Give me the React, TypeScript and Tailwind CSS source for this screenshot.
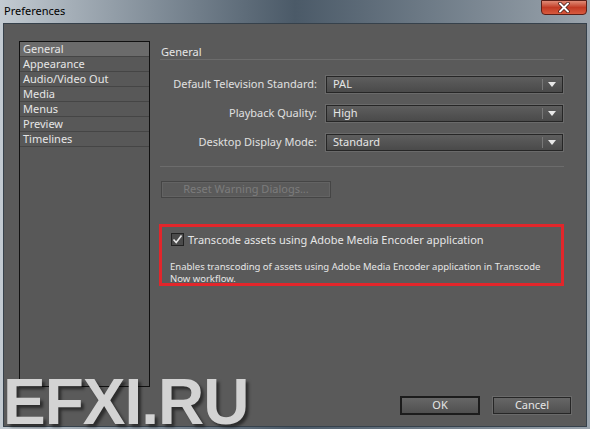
import React from "react";

const font = { fontFamily: '"Noto Sans", "DejaVu Sans", sans-serif' };

function Select({ value }: { value: string }) {
  return (
    <div className="w-[237px] h-[17px] border border-[#262626] shadow-[0_0_0_1px_#6a6a6a] bg-gradient-to-b from-[#5e5e5e] to-[#4a4a4a] flex items-center">
      <span className="flex-1 pl-[6px] text-[11px] leading-none text-[#e6e6e6] -mt-[2px]">{value}</span>
      <div className="w-px h-[11px] bg-[#2e2e2e] border-r border-[#777]" />
      <svg width="18" height="15" viewBox="0 0 18 15" className="mr-px">
        <path d="M5 5 L13 5 L9 10 Z" fill="#e8e8e8" />
      </svg>
    </div>
  );
}

function Row({ label, value }: { label: string; value: string }) {
  return (
    <div className="flex items-center h-[17px]">
      <div className="w-[166px] whitespace-nowrap text-right pr-[9px] text-[11px] text-[#e0e0e0]">{label}</div>
      <Select value={value} />
    </div>
  );
}

const items = ["General", "Appearance", "Audio/Video Out", "Media", "Menus", "Preview", "Timelines"];

export default function App() {
  return (
    <div
      className="relative w-[590px] h-[429px] overflow-hidden bg-gradient-to-r from-[#c3cbd2] via-[#4b5a68] to-[#9aa4ad]"
      style={font}
    >
      {/* title bar */}
      <div className="h-[23px] flex items-start justify-between">
        <span className="pl-[4px] pt-[3px] text-[11px] text-black">Preferences</span>
        <div className="mr-[3px] w-[46px] h-[15px] rounded-b-[4px] border border-[#5b1f18] bg-gradient-to-b from-[#e08a76] via-[#c23a24] to-[#d85a3e] flex items-center justify-center">
          <svg width="14" height="11" viewBox="0 0 14 11">
            <path d="M3 1.5 L11 9.5 M11 1.5 L3 9.5" stroke="#3a1510" strokeWidth="3.4" strokeLinecap="round" />
            <path d="M3 1.5 L11 9.5 M11 1.5 L3 9.5" stroke="#ffffff" strokeWidth="2" strokeLinecap="round" />
          </svg>
        </div>
      </div>

      {/* client area */}
      <div className="mx-[3px] h-[404px] border border-[#36414b] bg-[#5a5a5a] flex">
        {/* category list */}
        <div className="ml-[15px] mt-[17px] w-[131px] h-[346px] border border-[#111] bg-[#585858]">
          {items.map((it, i) => (
            <div
              key={it}
              className={`h-[15px] border-b border-[#454545] pl-[3px] text-[11px] leading-[14px] text-[#e6e6e6] ${
                i === 0 ? "bg-[#6b6b6b]" : ""
              }`}
            >
              {it}
            </div>
          ))}
        </div>

        {/* right panel */}
        <div className="ml-[10px] mt-[20px] w-[404px] flex flex-col">
          <div className="h-[15px] text-[11px] leading-[15px] text-[#e6e6e6] pl-px">General</div>
          <div className="h-px bg-[#3c3c3c] border-b border-[#6c6c6c]" />
          <div className="mt-[16px] flex flex-col gap-[12px]">
            <Row label="Default Television Standard:" value="PAL" />
            <Row label="Playback Quality:" value="High" />
            <Row label="Desktop Display Mode:" value="Standard" />
          </div>
          <div className="mt-[15px] h-px bg-[#3c3c3c] border-b border-[#6c6c6c]" />
          <div className="mt-[14px] ml-px w-[170px] h-[17px] border border-[#454545] shadow-[inset_0_0_0_1px_#636363] flex items-center justify-center text-[11px] text-[#7c7c7c]">
            Reset Warning Dialogs...
          </div>

          <div className="mt-[26px] -ml-px w-[405px] h-[62px] border-[3px] border-[#e2262b] pl-[9px] pt-[5px]">
            <div className="flex items-center gap-[4px]">
              <div className="w-[13px] h-[13px] border border-[#222] bg-[#4a4a4a] flex items-center justify-center">
                <svg width="11" height="11" viewBox="0 0 11 11">
                  <path d="M1.5 5.5 L4.2 8.5 L9.5 1.5" stroke="#e8e8e8" strokeWidth="1.6" fill="none" />
                </svg>
              </div>
              <span className="text-[11px] leading-[15px] text-[#e6e6e6]">
                Transcode assets using Adobe Media Encoder application
              </span>
            </div>
            <p className="mt-[14px] -ml-[1px] whitespace-nowrap text-[9.5px] leading-[12px] text-[#e6e6e6]">
              Enables transcoding of assets using Adobe Media Encoder application in Transcode
              <br />
              Now workflow.
            </p>
          </div>

          <div className="mt-auto mb-[11px] flex justify-end gap-[13px] mr-[-7px]">
            <div className="w-[80px] h-[19px] border-2 border-[#1c1c1c] bg-gradient-to-b from-[#666] to-[#505050] flex items-center justify-center text-[11px] text-[#e6e6e6]">
              OK
            </div>
            <div className="w-[78px] h-[17px] mt-px border border-[#262626] shadow-[0_0_0_1px_#6a6a6a] bg-gradient-to-b from-[#666] to-[#505050] flex items-center justify-center text-[11px] text-[#e6e6e6]">
              Cancel
            </div>
          </div>
        </div>
      </div>

      {/* watermark */}
      <div
        className="absolute left-[3px] top-[377px] text-[64px] leading-[50px] font-bold tracking-[-1px] text-[#d3d3d3] [text-shadow:3px_3px_3px_rgba(0,0,0,0.5)]"
        style={{ fontFamily: '"Liberation Sans", Arial, sans-serif' }}
      >
        EFXI.RU
      </div>
    </div>
  );
}
